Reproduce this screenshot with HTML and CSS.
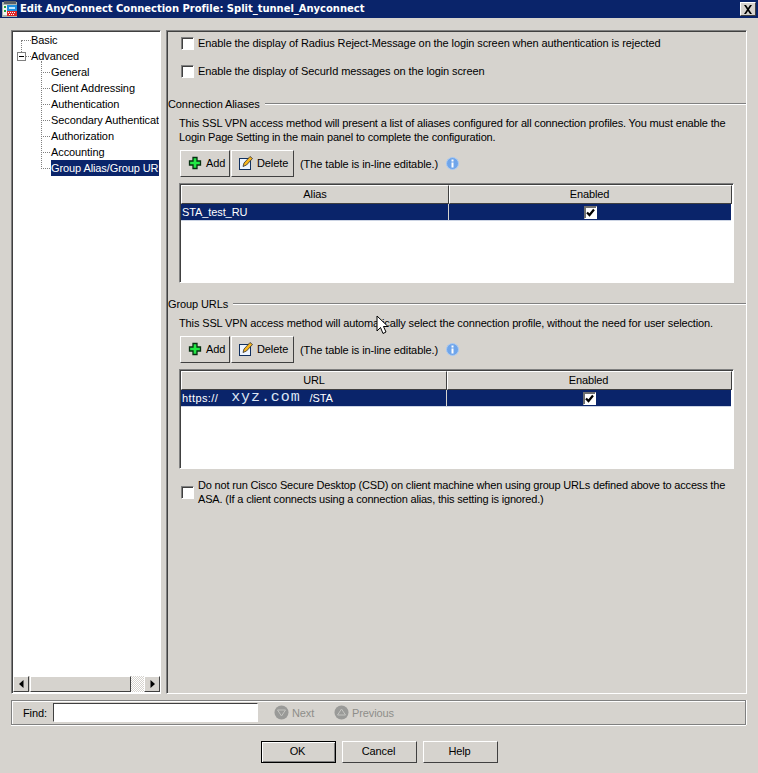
FILE: index.html
```html
<!DOCTYPE html>
<html lang="en">
<head>
<meta charset="utf-8">
<title>Edit AnyConnect Connection Profile</title>
<link rel="stylesheet" href="styles.css">
</head>
<body>
<div class="window">
  <header class="titlebar">
    <svg class="appicon" width="16" height="16" viewBox="0 0 16 16"><rect x="0" y="1" width="15" height="15" fill="#aeb4ae"/><rect x="2" y="0" width="12" height="3" fill="#5a6068"/><rect x="1" y="4" width="4" height="10" fill="#f0f4f0"/><rect x="2" y="5" width="2" height="2" fill="#20a040"/><rect x="2" y="9" width="2" height="2" fill="#20a040"/><rect x="5" y="4" width="10" height="6" fill="#1f8fe0"/><rect x="7" y="6" width="6" height="2" fill="#bfe6ff"/><rect x="5" y="10" width="10" height="5" fill="#e02828"/><path d="M6 11h1v1H6zm2 0h1v1H8zm2 0h1v1h-1zm2 0h1v1h-1zM7 13h1v1H7zm2 0h1v1H9zm2 0h1v1h-1z" fill="#fff"/></svg>
    <span class="title">Edit AnyConnect Connection Profile: Split_tunnel_Anyconnect</span>
    <span class="closebtn"><svg width="10" height="9" viewBox="0 0 10 9"><path d="M1 0h2l2 3 2-3h2L6 4.500 9 9H7L5 6 3 9H1l3-4.500z" fill="#000"/></svg></span>
  </header>

  <div class="main">
    <nav class="tree">
      <div class="tree-scroll">
        <div class="vline vline-root"></div>
        <div class="vline vline-child"></div>
        <div class="node n0"><i class="dash"></i>Basic</div>
        <div class="node n0"><span class="expander"></span><i class="dash short"></i>Advanced</div>
        <div class="node n1"><i class="dash"></i>General</div>
        <div class="node n1"><i class="dash"></i>Client Addressing</div>
        <div class="node n1"><i class="dash"></i>Authentication</div>
        <div class="node n1"><i class="dash"></i>Secondary Authentication</div>
        <div class="node n1"><i class="dash"></i>Authorization</div>
        <div class="node n1"><i class="dash"></i>Accounting</div>
        <div class="node n1"><i class="dash"></i><span class="selected">Group Alias/Group URL</span></div>
      </div>
      <div class="hscroll">
        <span class="sbtn"><svg width="5" height="8" viewBox="0 0 5 8"><path d="M4.500 0v8L0 4z" fill="#000"/></svg></span>
        <span class="thumb"></span>
        <span class="track"></span>
        <span class="sbtn"><svg width="5" height="8" viewBox="0 0 5 8"><path d="M.5 0v8L5 4z" fill="#000"/></svg></span>
      </div>
    </nav>

    <section class="panel">
      <label class="check-row first"><span class="cb"></span>Enable the display of Radius Reject-Message on the login screen when authentication is rejected</label>
      <label class="check-row second"><span class="cb"></span>Enable the display of SecurId messages on the login screen</label>

      <div class="group aliases">
        <div class="group-head"><span>Connection Aliases</span><i class="rule"></i></div>
        <p class="desc tight">This SSL VPN access method will present a list of aliases configured for all connection profiles. You must enable the<br>Login Page Setting in the main panel to complete the configuration.</p>
        <div class="toolbar">
          <button class="tbtn add"><svg width="14" height="14" viewBox="0 0 14 14"><path d="M5 1.500h4v3.500h3.500v4H9v3.500H5V9H1.500V5H5z" fill="#22e845" stroke="#063010" stroke-width="1.300"/></svg>Add</button>
          <button class="tbtn del"><svg width="16" height="16" viewBox="0 0 16 16"><rect x="1.500" y="3.500" width="11" height="11" fill="#eef5ff" stroke="#10305f"/><path d="M5 11.500l1-3.500 6-6.500 2.500 2L8.500 10z" fill="#f6b51e" stroke="#303030" stroke-width=".8"/></svg>Delete</button>
          <span class="hint">(The table is in-line editable.)</span>
          <svg class="info" width="13" height="13" viewBox="0 0 13 13"><circle cx="6.500" cy="6.500" r="6" fill="#6fa5ea" stroke="#a9c9f2"/><rect x="5.500" y="5.500" width="2" height="5" fill="#fff"/><rect x="5.500" y="2.500" width="2" height="2" fill="#fff"/></svg>
        </div>
        <div class="table t-alias">
          <div class="thead"><span class="th c1">Alias</span><span class="th c2">Enabled</span></div>
          <div class="tr"><span class="td c1">STA_test_RU</span><span class="td c2"><span class="tick"><svg width="9" height="9" viewBox="0 0 9 9"><path d="M1 4.500l2.500 2.500L8 1.500" fill="none" stroke="#000" stroke-width="2.200"/></svg></span></span></div>
        </div>
      </div>

      <div class="group urls">
        <div class="group-head"><span>Group URLs</span><i class="rule"></i></div>
        <p class="desc slight">This SSL VPN access method will automatically select the connection profile, without the need for user selection.</p>
        <div class="toolbar">
          <button class="tbtn add"><svg width="14" height="14" viewBox="0 0 14 14"><path d="M5 1.500h4v3.500h3.500v4H9v3.500H5V9H1.500V5H5z" fill="#22e845" stroke="#063010" stroke-width="1.300"/></svg>Add</button>
          <button class="tbtn del"><svg width="16" height="16" viewBox="0 0 16 16"><rect x="1.500" y="3.500" width="11" height="11" fill="#eef5ff" stroke="#10305f"/><path d="M5 11.500l1-3.500 6-6.500 2.500 2L8.500 10z" fill="#f6b51e" stroke="#303030" stroke-width=".8"/></svg>Delete</button>
          <span class="hint">(The table is in-line editable.)</span>
          <svg class="info" width="13" height="13" viewBox="0 0 13 13"><circle cx="6.500" cy="6.500" r="6" fill="#6fa5ea" stroke="#a9c9f2"/><rect x="5.500" y="5.500" width="2" height="5" fill="#fff"/><rect x="5.500" y="2.500" width="2" height="2" fill="#fff"/></svg>
        </div>
        <div class="table t-url">
          <div class="thead"><span class="th c1">URL</span><span class="th c2">Enabled</span></div>
          <div class="tr"><span class="td c1"><span class="proto">https://</span><span class="mono">xyz.com</span>/STA</span><span class="td c2"><span class="tick"><svg width="9" height="9" viewBox="0 0 9 9"><path d="M1 4.500l2.500 2.500L8 1.500" fill="none" stroke="#000" stroke-width="2.200"/></svg></span></span></div>
        </div>
        <label class="check-row csd"><span class="cb"></span><span class="csd-text">Do not run Cisco Secure Desktop (CSD) on client machine when using group URLs defined above to access the<br>ASA. (If a client connects using a connection alias, this setting is ignored.)</span></label>
      </div>
      <svg class="cursor" width="13" height="20" viewBox="0 0 13 20"><path d="M1 1v15l3.500-3.500L7 18.500l3-1.500-2.500-5.500H12z" fill="#fff" stroke="#000"/></svg>
    </section>
  </div>

  <div class="findbar">
    <span class="find-label">Find:</span>
    <span class="find-input"></span>
    <span class="nav-item next"><svg width="15" height="15" viewBox="0 0 15 15"><circle cx="7.500" cy="7.500" r="7" fill="#9a9a98"/><path d="M3.500 5h8l-4 6z" fill="none" stroke="#c4c4c0"/></svg>Next</span>
    <span class="nav-item prev"><svg width="15" height="15" viewBox="0 0 15 15"><circle cx="7.500" cy="7.500" r="7" fill="#9a9a98"/><path d="M3.500 10h8l-4-6z" fill="none" stroke="#c4c4c0"/></svg>Previous</span>
  </div>

  <footer class="actions">
    <button class="dlg default">OK</button>
    <button class="dlg">Cancel</button>
    <button class="dlg">Help</button>
  </footer>
</div>
</body>
</html>
```
FILE: styles.css
```css
* { box-sizing: border-box; }
html, body { margin: 0; padding: 0; }
body {
  width: 758px; height: 773px; overflow: hidden;
  background: #d6d3ce; color: #000;
  font: 11px/16px "Liberation Sans", Arial, sans-serif;
  letter-spacing: -0.1px;
}
.window { display: flex; flex-direction: column; height: 773px; }

.titlebar {
  height: 18px; background: #0a246a; color: #fff;
  display: flex; align-items: center; padding: 0 2px;
  font: bold 10px/18px "DejaVu Sans", sans-serif;
  letter-spacing: -0.03px;
}
.appicon { flex: none; margin-right: 2px; }
.title { flex: 1; white-space: nowrap; }
.closebtn {
  width: 16px; height: 14px; background: #d6d3ce; display: flex;
  align-items: center; justify-content: center;
  border: 1px solid; border-color: #fff #404040 #404040 #fff;
}

.main { display: flex; height: 664px; margin: 12px 0 0 11px; }
.tree {
  width: 150px; height: 664px; flex: none; display: flex; flex-direction: column;
  border: 1px solid; border-color: #808080 #fff #fff #808080;
  background: #fff; box-shadow: inset 1px 1px 0 #404040;
}
.tree-scroll { flex: 1; position: relative; overflow: hidden; padding: 1px 1px 0 1px; }
.node { height: 16px; line-height: 16px; white-space: nowrap; position: relative; overflow: hidden; }
.n0 { padding-left: 18px; }
.n1 { padding-left: 38px; }
.dash { position: absolute; top: 8px; width: 9px; border-top: 1px dotted #808080; }
.n0 .dash { left: 9px; }
.n1 .dash { left: 28px; }
.expander {
  position: absolute; left: 4px; top: 4px; width: 9px; height: 9px; background: #fff;
  border: 1px solid #808080; z-index: 1;
}
.expander::after { content: ""; position: absolute; left: 1px; top: 3px; width: 5px; height: 1px; background: #000; }
.vline { position: absolute; border-left: 1px dotted #808080; z-index: 1; }
.vline-root { left: 9px; top: 9px; height: 12px; }
.vline-child { left: 29px; top: 30px; height: 106px; }
.selected { display: block; background: #0a246a; color: #fff; height: 16px; }
.hscroll { height: 16px; display: flex; background: #d6d3ce; flex: none; margin: 0 0 1px 1px; }
.sbtn {
  width: 16px; height: 16px; flex: none; background: #d6d3ce; display: flex; align-items: center; justify-content: center;
  border: 1px solid; border-color: #fff #404040 #404040 #fff;
}
.thumb { width: 101px; flex: none; margin-left: 1px; background: #d6d3ce; border: 1px solid; border-color: #fff #404040 #404040 #fff; }
.track { flex: 1; background: repeating-conic-gradient(#fff 0 25%, #d6d3ce 0 50%) 0 0 / 2px 2px; }

.panel {
  width: 581px; height: 664px; margin-left: 5px; position: relative; flex: none;
  border: 1px solid; border-color: #808080 #fff #fff #808080;
  box-shadow: inset 1px 1px 0 #404040;
}
.check-row { display: flex; white-space: nowrap; align-items: center; }
.cb {
  width: 13px; height: 13px; flex: none; background: #fff; margin-right: 4px;
  border: 1px solid; border-color: #808080 #fff #fff #808080; box-shadow: inset 1px 1px 0 #404040;
}
.first { margin: 4px 0 0 14px; height: 16px; }
.second { margin: 12px 0 0 14px; height: 16px; }

.aliases { margin-top: 17px; }
.urls { margin-top: 13px; }
.group-head { display: flex; align-items: center; height: 16px; margin-left: 1px; }
.rule { flex: 1; height: 2px; margin-left: 5px; border-top: 1px solid #808080; border-bottom: 1px solid #fff; }
.desc { margin: 4px 0 0 12px; line-height: 14px; white-space: nowrap; }
.tight { letter-spacing: -0.16px; }
.slight { letter-spacing: -0.13px; }
.toolbar { display: flex; align-items: center; height: 27px; margin: 6px 0 0 13px; }
.tbtn {
  font: inherit; letter-spacing: inherit; height: 27px; display: flex; align-items: center;
  background: #d6d3ce; color: #000; margin-right: 1px; padding: 0 0 1px 6px;
  border: 1px solid; border-color: #fff #404040 #404040 #fff;
}
.add { width: 50px; gap: 4px; padding-left: 7px; }
.del { width: 63px; gap: 3px; }
.hint { margin-left: 5px; }
.info { margin-left: 8px; }

.table {
  margin: 6px 0 0 12px; width: 555px; height: 100px; background: #fff;
  border: 1px solid; border-color: #808080 #fff #fff #808080; box-shadow: inset 1px 1px 0 #404040;
  padding: 1px 1px 0 1px;
}
.thead { display: flex; height: 19px; }
.th {
  background: #d6d3ce; display: flex; align-items: center; justify-content: center; height: 19px; padding-bottom: 2px;
  border: 1px solid; border-color: #fff #404040 #404040 #fff;
}
.th.c2 { padding-right: 2px; }
.t-alias .c1 { width: 268px; }
.t-url .c1 { width: 266px; }
.c2 { flex: 1; }
.tr { display: flex; height: 17px; background: #0a246a; color: #fff; border-bottom: 1px solid #ccd4e4; margin-right: 1px; }
.td { display: flex; align-items: center; height: 16px; white-space: nowrap; padding-left: 1px; border-right: 1px solid #d6d3ce; }
.td.c2 { justify-content: center; border-right: 0; padding-left: 0; }
.tick {
  width: 13px; height: 13px; background: #fff; display: flex; align-items: center; justify-content: center;
  border: 1px solid; border-color: #707070 #fff #fff #707070; box-shadow: inset 1px 1px 0 #707070;
}
.proto { letter-spacing: .4px; }
.mono { font: 15px/16px "Liberation Mono", monospace; color: #dce6f5; margin: 0 9px 0 13px; letter-spacing: .9px; }

.csd { align-items: flex-start; margin: 9px 0 0 14px; line-height: 14px; }
.csd .cb { margin-top: 8px; }
.csd-text { letter-spacing: -0.18px; }
.cursor { position: absolute; left: 209px; top: 284px; }

.findbar {
  height: 25px; margin: 6px 12px 0 11px; display: flex; align-items: center;
  border: 1px solid #808080; box-shadow: 0 1px 0 #fff, 1px 0 0 #fff, inset 1px 1px 0 #fff;
}
.find-label { margin-left: 11px; width: 30px; flex: none; }
.find-input {
  width: 205px; height: 19px; background: #fff; flex: none;
  border: 1px solid; border-color: #404040 #fff #fff #404040;
}
.nav-item { display: flex; align-items: center; gap: 3px; color: #8e8e8a; flex: none; }
.next { margin-left: 16px; width: 60px; }

.actions { display: flex; gap: 6px; margin: 16px 0 0 261px; }
.dlg {
  width: 75px; height: 22px; font: inherit; letter-spacing: inherit; background: #d6d3ce; color: #000; padding: 0 2px 2px 0;
  border: 1px solid; border-color: #fff #404040 #404040 #fff;
}
.default { border-color: #000; box-shadow: inset 1px 1px 0 #fff, inset -1px -1px 0 #808080; }
```
